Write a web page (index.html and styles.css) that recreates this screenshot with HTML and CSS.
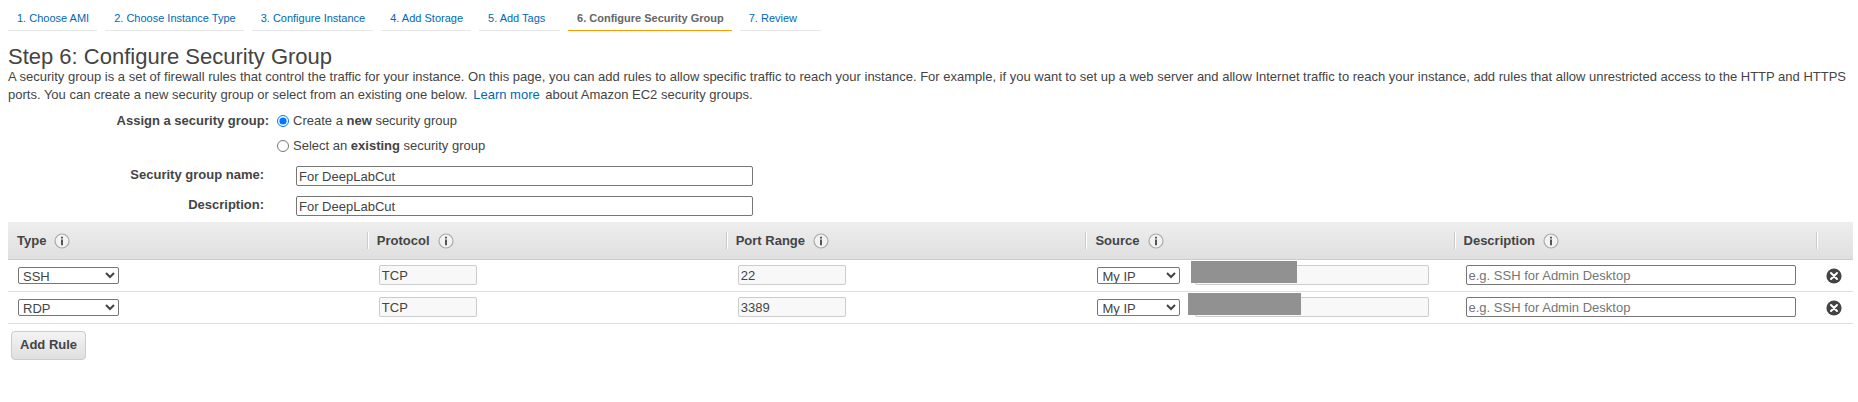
FILE: index.html
```
<!DOCTYPE html>
<html lang="en">
<head>
    <meta charset="UTF-8">
    <meta name="viewport" content="width=device-width, initial-scale=1.0">
    <title>Step 6: Configure Security Group</title>
    <link rel="stylesheet" href="styles.css">
</head>
<body>
    <!-- Icons shared by the table -->
    <svg class="sprite" aria-hidden="true">
        <symbol id="info" viewBox="0 0 16 16">
            <circle cx="8" cy="8" r="7" fill="#f2f2f2" stroke="#aaa" stroke-width="1.2"/>
            <path d="M7 3.8h2v1.7H7zM7 6.6h2v5.6H7z" fill="#555"/>
        </symbol>
        <symbol id="remove" viewBox="0 0 16 16">
            <circle cx="8" cy="8" r="7.6" fill="#444"/>
            <path d="M5 5l6 6M11 5l-6 6" stroke="#fff" stroke-width="2" stroke-linecap="round"/>
        </symbol>
    </svg>

    <nav class="steps">
        <a href="#">1. Choose AMI</a>
        <a href="#">2. Choose Instance Type</a>
        <a href="#">3. Configure Instance</a>
        <a href="#">4. Add Storage</a>
        <a href="#">5. Add Tags</a>
        <a href="#" class="active">6. Configure Security Group</a>
        <a href="#">7. Review</a>
    </nav>

    <main>
        <h1>Step 6: Configure Security Group</h1>
        <p class="intro">A security group is a set of firewall rules that control the traffic for your instance. On this page, you can add rules to allow specific traffic to reach your instance. For example, if you want to set up a web server and allow Internet traffic to reach your instance, add rules that allow unrestricted access to the HTTP and HTTPS ports. You can create a new security group or select from an existing one below. <a href="#" class="learn-more">Learn more</a> about Amazon EC2 security groups.</p>

        <form class="group-form">
            <div class="assign-row" role="radiogroup" aria-labelledby="assignLabel">
                <span class="assign-label" id="assignLabel">Assign a security group:</span>
                <div class="options">
                    <label><input type="radio" name="assign" checked><span>Create a <b>new</b> security group</span></label>
                    <label><input type="radio" name="assign"><span>Select an <b>existing</b> security group</span></label>
                </div>
            </div>
            <div class="field-row">
                <label for="groupName">Security group name:</label>
                <input type="text" id="groupName" value="For DeepLabCut">
            </div>
            <div class="field-row">
                <label for="groupDescription">Description:</label>
                <input type="text" id="groupDescription" value="For DeepLabCut">
            </div>
        </form>

        <table class="rules">
            <colgroup>
                <col class="col-type">
                <col class="col-protocol">
                <col class="col-port">
                <col class="col-source">
                <col class="col-description">
                <col class="col-remove">
            </colgroup>
            <thead>
                <tr>
                    <th><div>Type <svg><use href="#info"/></svg></div></th>
                    <th><div>Protocol <svg><use href="#info"/></svg></div></th>
                    <th><div>Port Range <svg><use href="#info"/></svg></div></th>
                    <th><div>Source <svg><use href="#info"/></svg></div></th>
                    <th><div>Description <svg><use href="#info"/></svg></div></th>
                    <th><div></div></th>
                </tr>
            </thead>
            <tbody>
                <tr>
                    <td><select class="type" aria-label="Type"><option>SSH</option></select></td>
                    <td><input type="text" class="protocol" aria-label="Protocol" value="TCP" disabled></td>
                    <td><input type="text" class="port" aria-label="Port range" value="22" disabled></td>
                    <td>
                        <div class="source">
                            <select aria-label="Source"><option>My IP</option></select>
                            <div class="address">
                                <input type="text" aria-label="Source address" disabled>
                                <span class="mask"></span>
                            </div>
                        </div>
                    </td>
                    <td><input type="text" class="description" aria-label="Description" placeholder="e.g. SSH for Admin Desktop"></td>
                    <td><button type="button" class="remove" aria-label="Remove rule"><svg><use href="#remove"/></svg></button></td>
                </tr>
                <tr>
                    <td><select class="type" aria-label="Type"><option>RDP</option></select></td>
                    <td><input type="text" class="protocol" aria-label="Protocol" value="TCP" disabled></td>
                    <td><input type="text" class="port" aria-label="Port range" value="3389" disabled></td>
                    <td>
                        <div class="source">
                            <select aria-label="Source"><option>My IP</option></select>
                            <div class="address">
                                <input type="text" aria-label="Source address" disabled>
                                <span class="mask wide"></span>
                            </div>
                        </div>
                    </td>
                    <td><input type="text" class="description" aria-label="Description" placeholder="e.g. SSH for Admin Desktop"></td>
                    <td><button type="button" class="remove" aria-label="Remove rule"><svg><use href="#remove"/></svg></button></td>
                </tr>
            </tbody>
        </table>

        <button type="button" class="add-rule">Add Rule</button>
    </main>
</body>
</html>
```
FILE: styles.css
```
* {
    box-sizing: border-box;
}

body {
    margin: 0;
    padding: 8px 5px 8px 8px;
    background-color: #fff;
    color: #444;
    font-family: "Liberation Sans", Arial, sans-serif;
    font-size: 13px;
    line-height: 18px;
}

a {
    color: #0069b4;
    text-decoration: none;
}

.sprite {
    display: none;
}

/* Wizard steps */
.steps {
    display: flex;
    gap: 8px;
    font-size: 11px;
}

.steps a {
    min-width: 81px;
    height: 23px;
    padding: 1px 8px 0 9px;
    border-bottom: 1px solid #e7e7e7;
}

.steps a.active {
    border-bottom-color: #f90;
    color: #666;
    font-weight: bold;
}

h1 {
    margin: 14px 0 0;
    font-size: 22px;
    font-weight: normal;
    line-height: 23px;
}

.intro {
    margin: 0;
}

.learn-more {
    margin: 0 2px;
}

/* Security group form */
.assign-row {
    display: flex;
    gap: 8px;
    margin-top: 7px;
}

.assign-label {
    width: 261px;
    line-height: 20px;
    font-weight: bold;
    text-align: right;
}

.options {
    display: grid;
    gap: 5px;
}

.options label {
    display: flex;
    align-items: center;
    gap: 4px;
    height: 20px;
}

.options input {
    width: 12px;
    height: 12px;
    margin: 0;
}

.field-row {
    display: flex;
    gap: 32px;
    margin-top: 10px;
}

.field-row label {
    width: 256px;
    font-weight: bold;
    text-align: right;
}

.field-row input {
    width: 457px;
}

input[type="text"] {
    height: 20px;
    padding: 1px 2px;
    border: 1px solid #767676;
    border-radius: 2px;
    background-color: #fff;
    color: #444;
    font: inherit;
}

input[type="text"]:disabled {
    border-color: #ccc;
    background-color: #f8f8f8;
}

input::placeholder {
    color: #757575;
}

select {
    display: block;
    height: 17px;
    padding: 0;
    border: 1px solid #767676;
    border-radius: 2px;
    background-color: #fff;
    color: #444;
    font: inherit;
    line-height: 15px;
}

/* Rules table */
.rules {
    width: 100%;
    margin-top: 6px;
    border-collapse: separate;
    border-spacing: 0;
    table-layout: fixed;
}

.col-type,
.col-protocol {
    width: 19.45%;
}

.col-port {
    width: 19.5%;
}

.col-source {
    width: 19.95%;
}

.col-description {
    width: 19.65%;
}

.col-remove {
    width: 2%;
}

.rules thead {
    background-image: linear-gradient(#eee, #dfdfdf);
}

.rules th {
    height: 38px;
    padding: 0;
    border-bottom: 1px solid #ccc;
    text-align: left;
}

.rules th div {
    display: flex;
    align-items: center;
    gap: 8px;
    height: 17px;
    padding-left: 9px;
    border-left: 1px solid #ccc;
    box-shadow: inset 1px 0 #fff;
}

.rules th:first-child div {
    border-left: 0;
    box-shadow: none;
}

.rules svg {
    display: block;
    width: 16px;
    height: 16px;
}

.rules td {
    height: 32px;
    padding: 0 10px 1px 12px;
    border-bottom: 1px solid #ddd;
}

.rules td input {
    display: block;
}

.rules td:first-child {
    padding-left: 10px;
}

.rules td:last-child {
    padding: 0 10px;
}

.type {
    width: 101px;
}

.protocol {
    width: 98px;
}

.port {
    width: 108px;
}

.description {
    width: 330px;
    max-width: 100%;
}

.source {
    display: flex;
    align-items: center;
    gap: 15px;
}

.source select {
    width: 83px;
}

.address {
    position: relative;
    width: 234px;
}

.address input {
    width: 100%;
}

/* Covers the hidden address */
.mask {
    position: absolute;
    top: -4px;
    left: -4px;
    width: 106px;
    height: 22px;
    background-color: #919191;
}

.mask.wide {
    left: -7px;
    width: 113px;
}

.remove {
    display: block;
    padding: 0;
    border: 0;
    background: none;
    cursor: pointer;
}

.add-rule {
    height: 29px;
    margin: 7px 0 0 3px;
    padding: 0 8px 1px;
    border: 1px solid #ccc;
    border-radius: 4px;
    background-image: linear-gradient(#f4f4f4, #dfdfdf);
    color: #444;
    font: inherit;
    font-weight: bold;
    cursor: pointer;
}
```
